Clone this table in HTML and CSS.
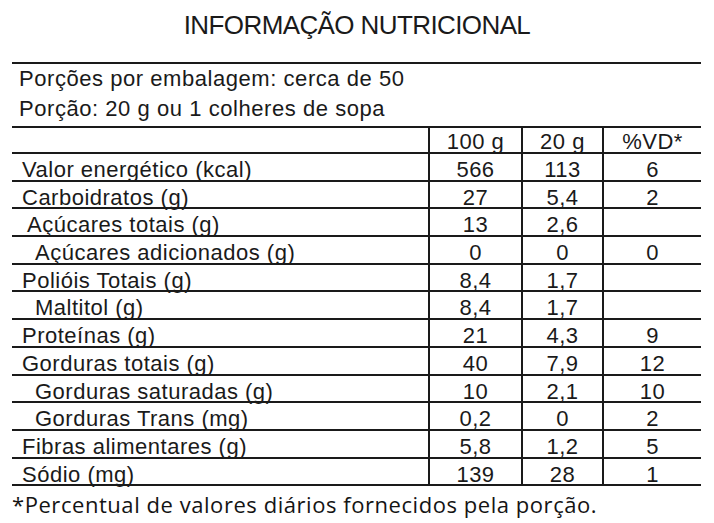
FILE: index.html
```html
<!DOCTYPE html>
<html lang="pt-BR">
<head>
<meta charset="utf-8">
<title>Informação Nutricional</title>
<link rel="stylesheet" href="styles.css">
</head>
<body>
<h1 class="title">INFORMAÇÃO NUTRICIONAL</h1>
<div class="panel">
  <div class="serving">
    <p class="serving-line">Porções por embalagem: cerca de 50</p>
    <p class="serving-line">Porção: 20 g ou 1 colheres de sopa</p>
  </div>
  <div class="nt">
    <div class="row head">
      <div class="cell name"></div>
      <div class="cell num">100 g</div>
      <div class="cell num">20 g</div>
      <div class="cell num">%VD*</div>
    </div>
    <div class="row">
      <div class="cell name">Valor energético (kcal)</div>
      <div class="cell num">566</div>
      <div class="cell num">113</div>
      <div class="cell num">6</div>
    </div>
    <div class="row">
      <div class="cell name">Carboidratos (g)</div>
      <div class="cell num">27</div>
      <div class="cell num">5,4</div>
      <div class="cell num">2</div>
    </div>
    <div class="row">
      <div class="cell name lvl1">Açúcares totais (g)</div>
      <div class="cell num">13</div>
      <div class="cell num">2,6</div>
      <div class="cell num"></div>
    </div>
    <div class="row">
      <div class="cell name lvl2">Açúcares adicionados (g)</div>
      <div class="cell num">0</div>
      <div class="cell num">0</div>
      <div class="cell num">0</div>
    </div>
    <div class="row">
      <div class="cell name">Polióis Totais (g)</div>
      <div class="cell num">8,4</div>
      <div class="cell num">1,7</div>
      <div class="cell num"></div>
    </div>
    <div class="row">
      <div class="cell name lvl2">Maltitol (g)</div>
      <div class="cell num">8,4</div>
      <div class="cell num">1,7</div>
      <div class="cell num"></div>
    </div>
    <div class="row">
      <div class="cell name">Proteínas (g)</div>
      <div class="cell num">21</div>
      <div class="cell num">4,3</div>
      <div class="cell num">9</div>
    </div>
    <div class="row">
      <div class="cell name">Gorduras totais (g)</div>
      <div class="cell num">40</div>
      <div class="cell num">7,9</div>
      <div class="cell num">12</div>
    </div>
    <div class="row">
      <div class="cell name lvl2">Gorduras saturadas (g)</div>
      <div class="cell num">10</div>
      <div class="cell num">2,1</div>
      <div class="cell num">10</div>
    </div>
    <div class="row">
      <div class="cell name lvl2">Gorduras Trans (mg)</div>
      <div class="cell num">0,2</div>
      <div class="cell num">0</div>
      <div class="cell num">2</div>
    </div>
    <div class="row">
      <div class="cell name">Fibras alimentares (g)</div>
      <div class="cell num">5,8</div>
      <div class="cell num">1,2</div>
      <div class="cell num">5</div>
    </div>
    <div class="row">
      <div class="cell name">Sódio (mg)</div>
      <div class="cell num">139</div>
      <div class="cell num">28</div>
      <div class="cell num">1</div>
    </div>
  </div>
  <p class="footnote">*Percentual de valores diários fornecidos pela porção.</p>
</div>
</body>
</html>
```

FILE: styles.css
```css
html, body {
  margin: 0;
  padding: 0;
  background: #ffffff;
}

body {
  color: #1a1a1a;
  font-family: "Liberation Sans", Arial, sans-serif;
}

.title {
  margin: 0;
  padding-top: 9.5px;
  height: 52.5px;
  font-size: 26px;
  line-height: 30px;
  font-weight: normal;
  letter-spacing: -0.6px;
  text-align: center;
}

.panel {
  margin-left: 12px;
  width: 689px;
  border-top: 2px solid #1a1a1a;
}

.serving {
  padding: 0 0 3px 7px;
  border-bottom: 2px solid #1a1a1a;
}

.serving-line {
  margin: 0;
  font-size: 22px;
  line-height: 29.5px;
  letter-spacing: 0.55px;
}

.row {
  display: grid;
  grid-template-columns: 416px 93px 81px 99px;
  height: 27.7px;
  box-sizing: border-box;
  border-bottom: 2px solid #1a1a1a;
}

.row.head {
  height: 26px;
}

.cell {
  box-sizing: border-box;
  padding-top: 5px;
  font-size: 22px;
  line-height: 21.7px;
  letter-spacing: 0.5px;
  white-space: nowrap;
}

.head .cell {
  padding-top: 3px;
}

.num {
  border-left: 2px solid #1a1a1a;
  text-align: center;
}

.name {
  padding-left: 10px;
}

.name.lvl1 {
  padding-left: 15px;
}

.name.lvl2 {
  padding-left: 23px;
}

.footnote {
  margin: 0;
  padding-top: 4px;
  font-family: "Open Sans", "Noto Sans", sans-serif;
  font-size: 22px;
  line-height: 28px;
  letter-spacing: 0.55px;
  color: #141414;
}
```
